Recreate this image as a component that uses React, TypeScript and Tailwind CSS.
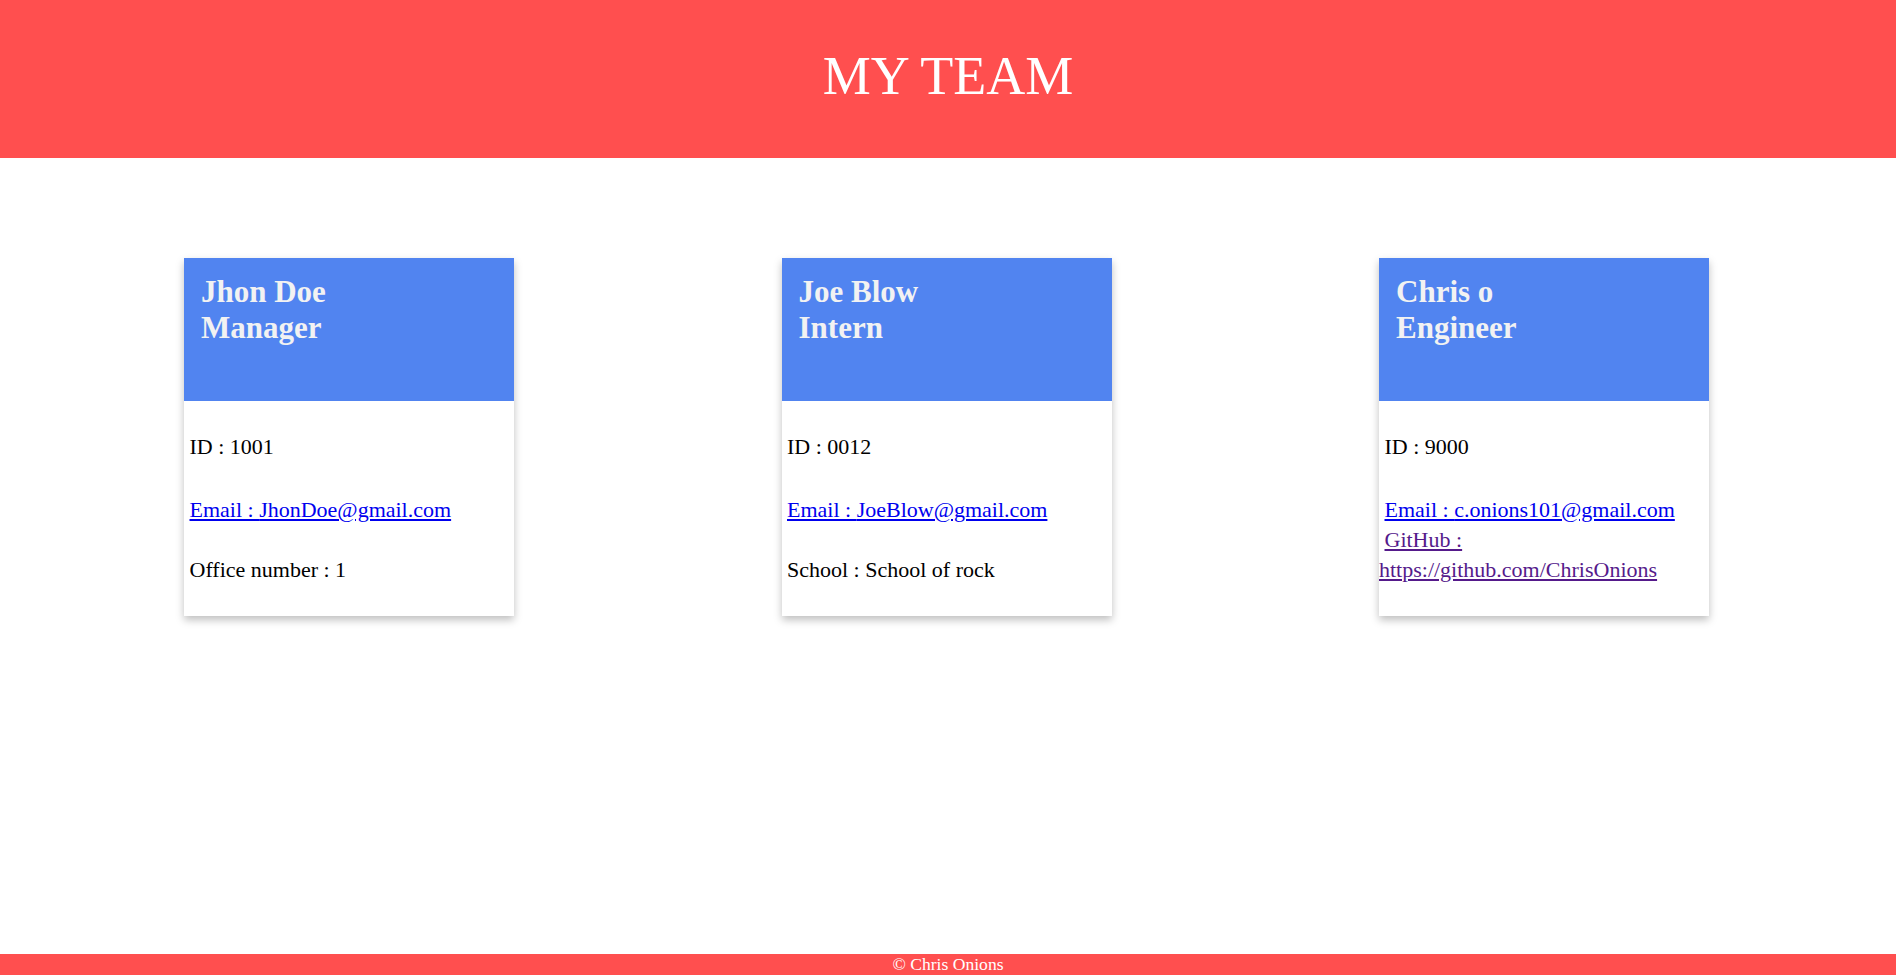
const team = [
  {
    name: "Jhon Doe",
    role: "Manager",
    id: "1001",
    email: "JhonDoe@gmail.com",
    extra: "Office number : 1",
  },
  {
    name: "Joe Blow",
    role: "Intern",
    id: "0012",
    email: "JoeBlow@gmail.com",
    extra: "School : School of rock",
  },
  {
    name: "Chris o",
    role: "Engineer",
    id: "9000",
    email: "c.onions101@gmail.com",
    github: "https://github.com/ChrisOnions",
  },
];

type Member = (typeof team)[number];

const Card = ({ member }: { member: Member }) => (
  <div className="flex h-[358px] w-[330px] flex-col bg-white shadow-[0_4px_8px_0_rgba(0,0,0,0.25)]">
    {/* Title */}
    <div className="h-[143px] bg-[#5184f0] pl-[17px] pt-[16px] text-[31px] font-bold leading-[36px] text-[#f2f2f2]">
      <div>{member.name}</div>
      <div>{member.role}</div>
    </div>

    {/* Details */}
    <div className="flex-1 pt-[33px] text-[22px] leading-[25px] text-black">
      <p className="indent-[5.5px]">ID : {member.id}</p>
      {member.github ? (
        <div className="mt-[35.6px] leading-[30px]">
          <p className="indent-[5.5px]">
            <a href={`mailto:${member.email}`} className="text-[#0000ee] underline">
              Email : {member.email}
            </a>
          </p>
          <p className="indent-[5.5px]">
            <a href={member.github} className="text-[#551a8b] underline">
              GitHub : {member.github}
            </a>
          </p>
        </div>
      ) : (
        <>
          <p className="mt-[38px] indent-[5.5px]">
            <a href={`mailto:${member.email}`} className="text-[#0000ee] underline">
              Email : {member.email}
            </a>
          </p>
          <p className="mt-[35px] indent-[5.5px]">{member.extra}</p>
        </>
      )}
    </div>
  </div>
);

export default function App() {
  return (
    <div className="flex h-screen flex-col overflow-hidden bg-white font-['Liberation_Serif','Times_New_Roman',serif]">
      <header className="h-[158px] shrink-0 bg-[#ff4f4f] pt-[45px] text-center text-[54px] leading-[62px] text-white">
        MY TEAM
      </header>

      <main className="flex flex-1 items-start justify-between pl-[184px] pr-[187px] pt-[100px]">
        {team.map((m) => (
          <Card key={m.id} member={m} />
        ))}
      </main>

      <footer className="h-[21px] shrink-0 bg-[#ff4f4f] text-center text-[17.6px] leading-[21px] text-white">
        © Chris Onions
      </footer>
    </div>
  );
}
